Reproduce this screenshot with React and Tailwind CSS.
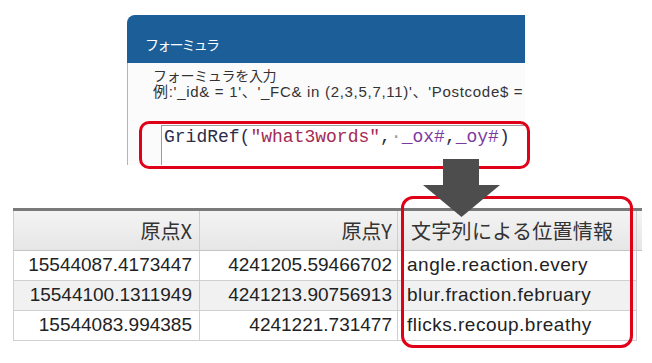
export default function App() {
  const rows = [
    ["15544087.4173447", "4241205.59466702", "angle.reaction.every"],
    ["15544100.1311949", "4241213.90756913", "blur.fraction.february"],
    ["15544083.994385", "4241221.731477", "flicks.recoup.breathy"],
  ];

  return (
    <div className="relative w-[652px] h-[363px] overflow-hidden bg-white">
      {/* Formula dialog (cropped) */}
      <div className="ml-[127px] mt-[15px] w-[398px] h-[150px] overflow-hidden flex flex-col">
        <div className="h-[48px] shrink-0 rounded-tl-[8px] bg-[#1b5e98] pl-[18px] pt-[20px] text-[14px] leading-[18px] tracking-[-1.8px] text-white font-['Noto_Sans_CJK_JP',sans-serif]">
          フォーミュラ
        </div>
        <div className="flex-1 border-l border-[#b4b4b4] bg-[#fbfbfb] pl-[25px] pt-[5px] text-[#333] font-['Liberation_Sans','Noto_Sans_CJK_JP',sans-serif]">
          <div className="text-[14px] leading-[16px] tracking-[-0.3px] whitespace-nowrap">
            フォーミュラを入力
          </div>
          <div className="text-[15px] leading-[16px] tracking-[0.7px] whitespace-nowrap">
            例:'_id&amp; = 1'、'_FC&amp; in (2,3,5,7,11)'、'Postcode$ =
          </div>
          <div className="ml-[8px] mt-[25px] h-[60px] border-l border-t border-[#9c9c9c] bg-white pl-[2px] pt-[1px] whitespace-nowrap font-['Liberation_Mono',monospace] text-[18px] leading-[20px] text-[#2d2d4a]">
            GridRef(<span className="text-[#a32b52]">"what3words"</span>,
            <span className="text-[#9a9a9a]">·</span>
            <span className="text-[#7a3aa0]">_ox#</span>,
            <span className="text-[#7a3aa0]">_oy#</span>)
          </div>
        </div>
      </div>

      {/* Attribute table */}
      <div className="ml-[13px] mt-[43px] w-[629px] border-t-[3px] border-[#7a7a7a] text-[#222]">
        <div className="flex h-[40px] border-b border-[#c4c4c4] bg-gradient-to-b from-[#f4f4f4] to-[#e6e6e6] text-[20px] font-['Noto_Sans_CJK_JP',sans-serif] text-[#333]">
          <div className="w-[187px] border-l border-r border-[#cfcfcf] flex items-center justify-end pr-[7px]">原点X</div>
          <div className="w-[198px] border-r border-[#cfcfcf] flex items-center justify-end pr-[5px]">原点Y</div>
          <div className="w-[239px] border-r border-[#cfcfcf] flex items-center pl-[13px] tracking-[0.3px]">文字列による位置情報</div>
          <div className="flex-1" />
        </div>
        {rows.map((r, i) => (
          <div
            key={i}
            className={`flex h-[30px] w-[624px] border-b border-[#d0d0d0] text-[19px] leading-[28px] font-['Liberation_Sans',sans-serif] ${i === 1 ? "bg-[#f1f1f1]" : "bg-white"}`}
          >
            <div className="w-[187px] border-l border-r border-[#d0d0d0] text-right pr-[7px]">{r[0]}</div>
            <div className="w-[198px] border-r border-[#d0d0d0] text-right pr-[5px]">{r[1]}</div>
            <div className="w-[239px] border-r border-[#d0d0d0] pl-[9px] tracking-[0.5px]">{r[2]}</div>
          </div>
        ))}
      </div>

      {/* Red highlight around the formula */}
      <div className="absolute left-[139px] top-[121px] w-[391px] h-[48px] rounded-[10px] border-[3px] border-[#e00018]" />
      {/* Red highlight around the string column */}
      <div className="absolute left-[401px] top-[196px] w-[232px] h-[152px] rounded-[12px] border-[3px] border-[#e00018]" />

      {/* Down arrow */}
      <svg className="absolute left-[423px] top-[159px]" width="77" height="58" viewBox="0 0 77 58">
        <rect x="20" y="0" width="36" height="27" fill="#4d4d4d" />
        <polygon points="0,26 77,26 38.5,58" fill="#4d4d4d" />
      </svg>
    </div>
  );
}
